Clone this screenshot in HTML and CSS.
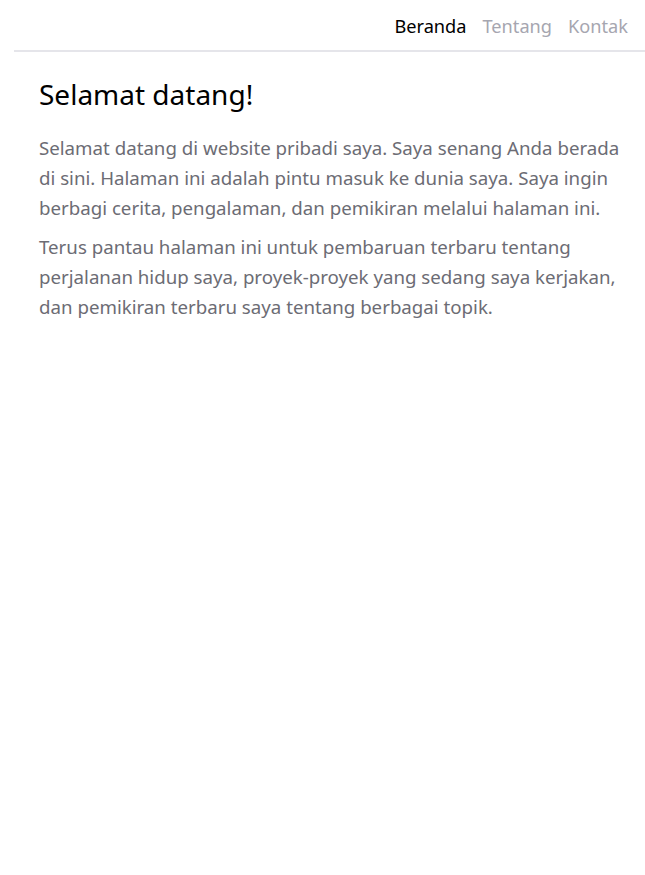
FILE: index.html
```html
<!DOCTYPE html>
<html lang="id">
<head>
<meta charset="utf-8">
<title>Beranda</title>
<link rel="stylesheet" href="styles.css">
</head>
<body>
<div class="page">
  <header class="topbar">
    <nav class="nav">
      <a class="nav-link active" href="#">Beranda</a>
      <a class="nav-link" href="#">Tentang</a>
      <a class="nav-link" href="#">Kontak</a>
    </nav>
  </header>
  <main class="content">
    <h1 class="title">Selamat datang!</h1>
    <p class="text">Selamat datang di website pribadi saya. Saya senang Anda berada di sini. Halaman ini adalah pintu masuk ke dunia saya. Saya ingin berbagi cerita, pengalaman, dan pemikiran melalui halaman ini.</p>
    <p class="text">Terus pantau halaman ini untuk pembaruan terbaru tentang perjalanan hidup saya, proyek-proyek yang sedang saya kerjakan, dan pemikiran terbaru saya tentang berbagai topik.</p>
  </main>
</div>
</body>
</html>
```
FILE: styles.css
```css
html, body {
  margin: 0;
  padding: 0;
  background: #fff;
}
body {
  font-family: "Noto Sans", "Open Sans", sans-serif;
}
.page {
  padding-left: 14px;
}
.topbar {
  display: flex;
  justify-content: flex-end;
  border-bottom: 2px solid #e5e5ea;
  height: 52px;
  box-sizing: border-box;
  padding-right: 17px;
  padding-top: 1px;
}
.nav {
  display: flex;
  align-items: center;
  gap: 16px;
}
.nav-link {
  font-size: 18.2px;
  color: #a6a6b0;
  text-decoration: none;
}
.nav-link.active {
  color: #000;
}
.content {
  padding: 22px 20px 0 25px;
}
.title {
  font-size: 28px;
  font-weight: 400;
  margin: 0 0 19px;
  color: #000;
  line-height: 40px;
}
.text {
  font-size: 18.7px;
  line-height: 30px;
  color: #6c6c74;
  margin: 0 0 9px;
}
```
